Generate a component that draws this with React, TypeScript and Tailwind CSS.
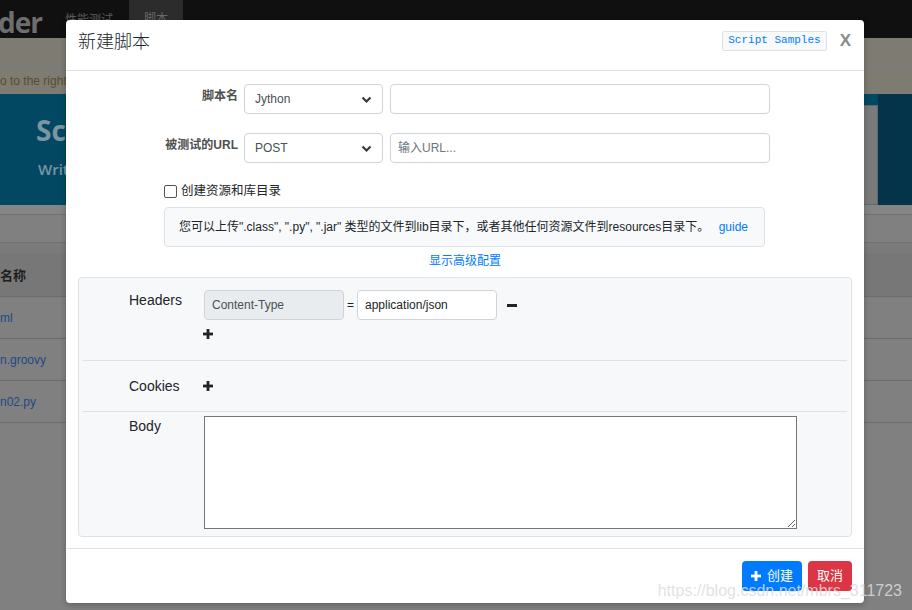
import React from "react";

const Chevron = () => (
  <svg width="11" height="8" viewBox="0 0 11 8" className="absolute right-[10px] top-[11px]">
    <path d="M1.5 1.5 L5.5 5.5 L9.5 1.5" fill="none" stroke="#343a40" strokeWidth="2.2" />
  </svg>
);

const Plus = ({ color = "#212529" }: { color?: string }) => (
  <svg width="10" height="10" viewBox="0 0 10 10">
    <rect x="3.6" y="0" width="2.8" height="10" fill={color} />
    <rect x="0" y="3.6" width="10" height="2.8" fill={color} />
  </svg>
);

export default function App() {
  return (
    <div className="relative w-[912px] h-[610px] overflow-hidden bg-[#808080] font-['Liberation_Sans','Noto_Sans_CJK_SC',sans-serif]">
      {/* background page (dimmed) */}
      <div className="h-[38px] bg-[#101010] flex items-stretch">
        <div className="w-[67px] flex items-center text-[28px] font-bold tracking-[-1px] text-[#6e6e6e] font-['Open_Sans',sans-serif] leading-none -ml-[2px] pt-[5px]">der</div>
        <div className="w-[64px] flex items-center text-[12px] text-[#5c5c5c] pt-[2px]">性能测试</div>
        <div className="w-[54px] bg-[#2c2c2c] flex items-center justify-center text-[12px] text-[#6a6a6a]">脚本</div>
      </div>
      <div className="h-[30px] bg-[#7e7b73] border-b border-[#7a7c86]"></div>
      <div className="h-[26px] bg-[#7e7b72] text-[12px] text-[#5b4c2c] flex items-center">o to the right</div>
      <div className="relative h-[111px] bg-[#034862] pl-[36px] pt-[22px]">
        <div className="text-[28px] font-bold text-[#7b95a2] leading-none font-['Open_Sans',sans-serif]">Scr</div>
        <div className="mt-[18px] ml-[2px] text-[15px] font-semibold text-[#7b95a2] leading-none font-['Open_Sans',sans-serif]">Writ</div>
        <div className="absolute left-[850px] top-[11px] w-[28px] h-[100px] bg-[#7a7a7a] border border-[#5e6a70]"></div>
        <div className="absolute left-[878px] top-[0px] w-[34px] h-[111px] bg-[#03344a]"></div>
      </div>
      <div className="h-[10px] bg-[#858585] border-b border-[#707070]"></div>
      <div className="h-[28px] border-b border-[#707070]"></div>
      <div className="h-[10px] bg-[#7b7b7b]"></div>
      <div className="h-[44px] bg-[#777777] border-b border-[#6c6c6c] flex items-center text-[13px] font-bold text-[#1f1f1f] pt-[2px]">名称</div>
      <div className="h-[42px] border-b border-[#6c6c6c] flex items-center text-[12px] text-[#1b4a86]">ml</div>
      <div className="h-[42px] border-b border-[#6c6c6c] flex items-center text-[12px] text-[#1b4a86]">n.groovy</div>
      <div className="h-[42px] border-b border-[#6c6c6c] flex items-center text-[12px] text-[#1b4a86]">n02.py</div>

      {/* modal */}
      <div className="absolute left-[66px] top-[20px] w-[798px] h-[583px] bg-white rounded-[4px] shadow-[0_2px_6px_rgba(0,0,0,0.25)] flex flex-col">
        <div className="h-[51px] pb-[9px] pl-[12px] pr-[13px] flex items-center border-b border-[#dee2e6]">
          <div className="text-[18px] text-[#212529] font-['Noto_Sans_CJK_SC',sans-serif] font-light flex-1">新建脚本</div>
          <div className="h-[20px] px-[5px] flex items-center bg-[#f8f9fa] border border-[#dee2e6] rounded-[2px] text-[11px] text-[#007bff] font-['Liberation_Mono',monospace]">Script Samples</div>
          <div className="ml-[13px] text-[17px] font-bold text-[#8a8a8a] leading-none">X</div>
        </div>

        <div className="pt-[13px]">
          <div className="flex h-[30px]">
            <div className="w-[172px] text-right text-[12px] font-bold text-[#4f4f4f] pt-[3px]">脚本名</div>
            <div className="relative ml-[6px] w-[139px] h-[30px] border border-[#ced4da] rounded-[4px] text-[12px] text-[#495057] pl-[10px] flex items-center">Jython<Chevron /></div>
            <div className="ml-[7px] w-[380px] h-[30px] border border-[#ced4da] rounded-[4px]"></div>
          </div>
          <div className="flex h-[30px] mt-[19px]">
            <div className="w-[172px] text-right text-[12px] font-bold text-[#4f4f4f] pt-[3px]">被测试的URL</div>
            <div className="relative ml-[6px] w-[139px] h-[30px] border border-[#ced4da] rounded-[4px] text-[12px] text-[#495057] pl-[10px] flex items-center">POST<Chevron /></div>
            <div className="ml-[7px] w-[380px] h-[30px] border border-[#ced4da] rounded-[4px] text-[12px] text-[#6c757d] pl-[7px] flex items-center">输入URL...</div>
          </div>
          <div className="mt-[19px] ml-[98px] h-[18px] flex items-center">
            <div className="w-[13px] h-[13px] border border-[#555] rounded-[2px] bg-white"></div>
            <div className="ml-[4px] text-[12.5px] text-[#212529]">创建资源和库目录</div>
          </div>
          <div className="mt-[7px] ml-[98px] w-[601px] h-[40px] bg-[#f8f9fa] border border-[#dee2e6] rounded-[4px] flex items-center justify-between pl-[14px] pr-[16px] text-[12px] text-[#212529]">
            <span>您可以上传".class", ".py", ".jar" 类型的文件到lib目录下，或者其他任何资源文件到resources目录下。</span>
            <span className="text-[#007bff]">guide</span>
          </div>
          <div className="mt-[5px] h-[18px] text-center text-[12px] text-[#007bff] leading-[18px]">显示高级配置</div>

          <div className="mt-[7px] mx-[12px] h-[260px] bg-[#f7f8fa] border border-[#dee2e6] rounded-[4px] flex flex-col">
            <div className="h-[82px] flex pl-[50px] pt-[12px]">
              <div className="w-[75px] text-[14px] text-[#212529] leading-[20px]">Headers</div>
              <div className="flex flex-col">
                <div className="flex items-center">
                  <div className="w-[140px] h-[30px] bg-[#e9ecef] border border-[#ced4da] rounded-[4px] text-[12px] text-[#495057] pl-[7px] flex items-center">Content-Type</div>
                  <div className="mx-[3px] text-[12px] text-[#212529]">=</div>
                  <div className="w-[140px] h-[30px] bg-white border border-[#ced4da] rounded-[4px] text-[12px] text-[#212529] pl-[7px] flex items-center">application/json</div>
                  <div className="ml-[10px] w-[10px] h-[3px] bg-[#212529]"></div>
                </div>
                <div className="mt-[9px] -ml-[1px]"><Plus /></div>
              </div>
            </div>
            <div className="mx-[4px] h-px bg-[#dee2e6]"></div>
            <div className="h-[50px] flex items-center pl-[50px]">
              <div className="w-[74px] text-[14px] text-[#212529] leading-[20px]">Cookies</div>
              <Plus />
            </div>
            <div className="mx-[4px] h-px bg-[#dee2e6]"></div>
            <div className="flex pl-[50px] pt-[4px]">
              <div className="w-[75px] text-[14px] text-[#212529] leading-[20px]">Body</div>
              <textarea className="w-[593px] h-[113px] border border-[#767676] bg-white outline-none"></textarea>
            </div>
          </div>
        </div>

        <div className="mt-[11px] border-t border-[#dee2e6] flex justify-end pr-[12px] pt-[12px] gap-[6px]">
          <div className="w-[60px] h-[30px] bg-[#007bff] rounded-[4px] flex items-center justify-center gap-[6px] text-[13px] text-white">
            <Plus color="#ffffff" />
            <span>创建</span>
          </div>
          <div className="w-[44px] h-[30px] bg-[#dc3545] rounded-[4px] flex items-center justify-center text-[13px] text-white">取消</div>
        </div>
      </div>

      <div className="absolute right-[10px] top-[581px] text-[16px] leading-[20px] text-[rgba(220,220,220,0.85)]">https://blog.csdn.net/mbrs_311723</div>
    </div>
  );
}
